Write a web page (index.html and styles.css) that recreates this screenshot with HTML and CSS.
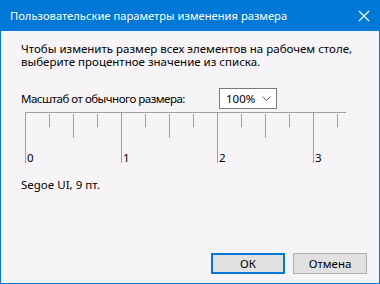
FILE: index.html
```html
<!DOCTYPE html>
<html lang="ru">
<head>
    <meta charset="UTF-8">
    <title>Пользовательские параметры изменения размера</title>
    <link rel="stylesheet" href="styles.css">
</head>
<body>
    <div class="window">
        <div class="titlebar">
            <span class="title">Пользовательские параметры изменения размера</span>
            <svg class="close" width="12" height="12" viewBox="0 0 12 12">
                <path d="M1 1 L11 11 M11 1 L1 11" stroke="#ffffff" stroke-width="1.2" fill="none"/>
            </svg>
        </div>

        <div class="content">
            <p class="intro">Чтобы изменить размер всех элементов на рабочем столе,<br>выберите процентное значение из списка.</p>

            <div class="scale-row">
                <span class="scale-label">Масштаб от обычного размера:</span>
                <div class="select">
                    <span>100%</span>
                    <svg width="9" height="5" viewBox="0 0 9 5">
                        <path d="M0.5 0.5 L4.5 4.5 L8.5 0.5" stroke="#606060" stroke-width="1" fill="none"/>
                    </svg>
                </div>
            </div>

            <!-- линейка -->
            <svg class="ruler" width="322" height="56" viewBox="0 0 322 56">
                <g stroke="#a0a0a0" stroke-width="1">
                    <line x1="0" y1="0.5" x2="321" y2="0.5"/>
                    <line x1="0.5" y1="0" x2="0.5" y2="51"/>
                    <line x1="96.5" y1="0" x2="96.5" y2="51"/>
                    <line x1="192.5" y1="0" x2="192.5" y2="51"/>
                    <line x1="288.5" y1="0" x2="288.5" y2="51"/>
                    <line x1="48.5" y1="2" x2="48.5" y2="26"/>
                    <line x1="144.5" y1="2" x2="144.5" y2="26"/>
                    <line x1="240.5" y1="2" x2="240.5" y2="26"/>
                    <line x1="24.5" y1="2" x2="24.5" y2="15"/>
                    <line x1="72.5" y1="2" x2="72.5" y2="15"/>
                    <line x1="120.5" y1="2" x2="120.5" y2="15"/>
                    <line x1="168.5" y1="2" x2="168.5" y2="15"/>
                    <line x1="216.5" y1="2" x2="216.5" y2="15"/>
                    <line x1="264.5" y1="2" x2="264.5" y2="15"/>
                    <line x1="312.5" y1="2" x2="312.5" y2="15"/>
                </g>
                <g class="ruler-num">
                    <text x="2" y="50">0</text>
                    <text x="98" y="50">1</text>
                    <text x="194" y="50">2</text>
                    <text x="290" y="50">3</text>
                </g>
            </svg>

            <p class="font-info">Segoe UI, 9 пт.</p>

            <div class="buttons">
                <div class="btn btn-default">ОК</div>
                <div class="btn">Отмена</div>
            </div>
        </div>
    </div>
</body>
</html>
```

FILE: styles.css
```css
body {
    margin: 0;
    font-family: "Noto Sans", "DejaVu Sans", sans-serif;
    font-size: 11.5px;
    color: #000;
}
.window {
    width: 380px;
    height: 284px;
    box-sizing: border-box;
    border: 1px solid #0078d7;
    border-top: none;
    background-color: #f7f4f7;
    display: flex;
    flex-direction: column;
}
.titlebar {
    height: 31px;
    background-color: #0078d7;
    color: #fff;
    display: flex;
    align-items: center;
    justify-content: space-between;
    padding: 0 9px 0 9px;
    flex-shrink: 0;
}
.title {
    font-size: 11.2px;
}
.close {
    margin-right: 0;
}
.content {
    flex: 1;
    display: flex;
    flex-direction: column;
    padding: 0 12px 9px 20px;
}
.intro {
    margin: 11px 0 0 0;
    line-height: 13px;
}
.scale-row {
    display: flex;
    align-items: center;
    margin-top: 20px;
}
.scale-label {
    width: 198px;
    letter-spacing: -0.5px;
}
.select {
    width: 58px;
    height: 21px;
    box-sizing: border-box;
    border: 1px solid #7a7a7a;
    background-color: #fff;
    display: flex;
    align-items: center;
    justify-content: space-between;
    padding: 0 5px 0 6px;
}
.ruler {
    display: block;
    margin: 3px 0 0 4px;
    overflow: visible;
}
.ruler-num {
    font-size: 11.5px;
    fill: #000;
}
.font-info {
    margin: 9px 0 0 0;
}
.buttons {
    margin-top: auto;
    display: flex;
    justify-content: flex-end;
    gap: 8px;
}
.btn {
    width: 74px;
    height: 21px;
    box-sizing: border-box;
    border: 1px solid #adadad;
    background-color: #e1e1e1;
    display: flex;
    align-items: center;
    justify-content: center;
}
.btn-default {
    border: 2px solid #0078d7;
}
```
